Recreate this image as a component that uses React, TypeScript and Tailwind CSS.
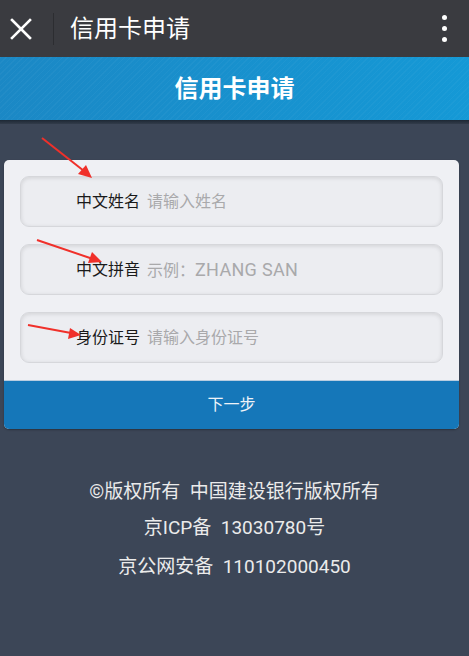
import React from "react";

const font = { fontFamily: '"Roboto", "Noto Sans CJK SC", sans-serif' };

function Field({ label, placeholder }: { label: string; placeholder: React.ReactNode }) {
  return (
    <div className="h-[51px] rounded-[9px] border border-[#d6d7db] bg-[#ecedf1] shadow-[inset_0_1px_4px_rgba(0,0,0,0.12)] flex items-center pl-[55px]">
      <span className="text-[16px] text-[#1a1a1a] leading-none">{label}</span>
      <span className="ml-[7px] text-[16px] text-[#a9a9ab] leading-none">{placeholder}</span>
    </div>
  );
}

export default function App() {
  return (
    <div className="relative w-[469px] h-[656px] bg-[#3c4657] overflow-hidden" style={font}>
      {/* top bar */}
      <div className="h-[57px] bg-[#3a3b40] flex items-center">
        <div className="w-[53px] flex justify-center">
          <svg width="24" height="24" viewBox="0 0 24 24" className="-ml-[12px]">
            <path d="M3 3 L21 21 M21 3 L3 21" stroke="#ffffff" strokeWidth="2.6" strokeLinecap="square" />
          </svg>
        </div>
        <div className="w-px h-[32px] bg-[#2c2d31]" />
        <div className="ml-[16px] text-[24px] text-white leading-none">信用卡申请</div>
        <div className="ml-auto mr-[22px] flex flex-col gap-[6px] items-center">
          <div className="w-[5px] h-[5px] rounded-full bg-white" />
          <div className="w-[5px] h-[5px] rounded-full bg-white" />
          <div className="w-[5px] h-[5px] rounded-full bg-white" />
        </div>
      </div>
      {/* banner */}
      <div className="relative h-[63px] bg-[linear-gradient(to_right,#1b88c5,#1599d6)] flex items-center justify-center">
        <div className="absolute inset-0 bg-[repeating-linear-gradient(135deg,rgba(255,255,255,0.03)_0px,rgba(255,255,255,0.03)_1px,transparent_1px,transparent_4px)]" />
        <span className="relative text-[24px] font-bold text-white leading-none">信用卡申请</span>
      </div>
      <div className="h-[4px] bg-[linear-gradient(to_bottom,#1d2835,#323c4b)]" />
      {/* card */}
      <div className="mt-[36px] mx-[4px] w-[455px] rounded-[5px] bg-[#eff0f4] overflow-hidden shadow-[0_1px_2px_rgba(0,0,0,0.3)]">
        <div className="px-[16px] pt-[16px] pb-[17px] flex flex-col gap-[17px]">
          <Field label="中文姓名" placeholder="请输入姓名" />
          <Field
            label="中文拼音"
            placeholder={
              <>
                示例：<span className="text-[18px] tracking-[0.3px]">ZHANG SAN</span>
              </>
            }
          />
          <Field label="身份证号" placeholder="请输入身份证号" />
        </div>
        <div className="h-[49px] bg-[#1577b9] border-t border-[#b8cde0] flex items-center justify-center">
          <span className="text-[16px] text-[#eef3f8] leading-none">下一步</span>
        </div>
      </div>
      {/* footer */}
      <div className="mt-[53px] flex flex-col items-center text-[19px] text-[#ebebeb] leading-none">
        <div>©版权所有&nbsp;&nbsp;中国建设银行版权所有</div>
        <div className="mt-[17px]">京ICP备&nbsp;&nbsp;13030780号</div>
        <div className="mt-[20px]">京公网安备&nbsp;&nbsp;110102000450</div>
      </div>
      {/* annotation arrows */}
      <svg className="absolute left-0 top-0 pointer-events-none" width="469" height="656">
        <g fill="#f0302a" stroke="#f0302a">
          <line x1="42" y1="138" x2="84" y2="171" strokeWidth="2" />
          <polygon points="92,178 78,174 86,165" stroke="none" />
          <line x1="37" y1="240" x2="93" y2="259" strokeWidth="2" />
          <polygon points="102,262 88,263 92,252" stroke="none" />
          <line x1="28" y1="325" x2="71" y2="333" strokeWidth="2" />
          <polygon points="81,335 68,339 70,328" stroke="none" />
        </g>
      </svg>
    </div>
  );
}
